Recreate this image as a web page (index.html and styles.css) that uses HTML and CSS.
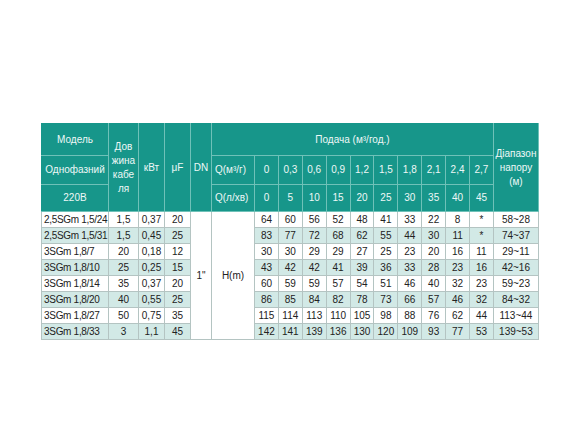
FILE: index.html
```html
<!DOCTYPE html>
<html lang="uk">
<head>
<meta charset="utf-8">
<title>Таблиця</title>
<link rel="stylesheet" href="styles.css">
</head>
<body>
<div class="wrap">
<table class="spec">
  <colgroup>
    <col class="c-model"><col class="c-len"><col class="c-kw"><col class="c-uf"><col class="c-dn"><col class="c-q">
    <col class="c-n"><col class="c-n"><col class="c-n"><col class="c-n"><col class="c-n">
    <col class="c-n"><col class="c-n"><col class="c-n"><col class="c-n"><col class="c-n">
    <col class="c-r">
  </colgroup>
  <thead>
    <tr class="h1">
      <th>Модель</th>
      <th rowspan="3" class="wrapcell">Дов<br>жина<br>кабе<br>ля</th>
      <th rowspan="3">кВт</th>
      <th rowspan="3">μF</th>
      <th rowspan="3">DN</th>
      <th colspan="11">Подача (м³/год.)</th>
      <th rowspan="3" class="wrapcell">Діапазон<br>напору<br>(м)</th>
    </tr>
    <tr class="h2">
      <th>Однофазний</th>
      <th class="ql">Q(м³/г)</th>
      <th>0</th><th>0,3</th><th>0,6</th><th>0,9</th><th>1,2</th><th>1,5</th><th>1,8</th><th>2,1</th><th>2,4</th><th>2,7</th>
    </tr>
    <tr class="h3">
      <th>220В</th>
      <th class="ql">Q(л/хв)</th>
      <th>0</th><th>5</th><th>10</th><th>15</th><th>20</th><th>25</th><th>30</th><th>35</th><th>40</th><th>45</th>
    </tr>
  </thead>
  <tbody>
    <tr>
      <td class="m">2,5SGm 1,5/24</td><td>1,5</td><td>0,37</td><td>20</td>
      <td rowspan="8" class="plain">1"</td><td rowspan="8" class="plain">H(m)</td>
      <td>64</td><td>60</td><td>56</td><td>52</td><td>48</td><td>41</td><td>33</td><td>22</td><td>8</td><td>*</td><td>58~28</td>
    </tr>
    <tr class="alt">
      <td class="m">2,5SGm 1,5/31</td><td>1,5</td><td>0,45</td><td>25</td>
      <td>83</td><td>77</td><td>72</td><td>68</td><td>62</td><td>55</td><td>44</td><td>30</td><td>11</td><td>*</td><td>74~37</td>
    </tr>
    <tr>
      <td class="m">3SGm 1,8/7</td><td>20</td><td>0,18</td><td>12</td>
      <td>30</td><td>30</td><td>29</td><td>29</td><td>27</td><td>25</td><td>23</td><td>20</td><td>16</td><td>11</td><td>29~11</td>
    </tr>
    <tr class="alt">
      <td class="m">3SGm 1,8/10</td><td>25</td><td>0,25</td><td>15</td>
      <td>43</td><td>42</td><td>42</td><td>41</td><td>39</td><td>36</td><td>33</td><td>28</td><td>23</td><td>16</td><td>42~16</td>
    </tr>
    <tr>
      <td class="m">3SGm 1,8/14</td><td>35</td><td>0,37</td><td>20</td>
      <td>60</td><td>59</td><td>59</td><td>57</td><td>54</td><td>51</td><td>46</td><td>40</td><td>32</td><td>23</td><td>59~23</td>
    </tr>
    <tr class="alt">
      <td class="m">3SGm 1,8/20</td><td>40</td><td>0,55</td><td>25</td>
      <td>86</td><td>85</td><td>84</td><td>82</td><td>78</td><td>73</td><td>66</td><td>57</td><td>46</td><td>32</td><td>84~32</td>
    </tr>
    <tr>
      <td class="m">3SGm 1,8/27</td><td>50</td><td>0,75</td><td>35</td>
      <td>115</td><td>114</td><td>113</td><td>110</td><td>105</td><td>98</td><td>88</td><td>76</td><td>62</td><td>44</td><td>113~44</td>
    </tr>
    <tr class="alt">
      <td class="m">3SGm 1,8/33</td><td>3</td><td>1,1</td><td>45</td>
      <td>142</td><td>141</td><td>139</td><td>136</td><td>130</td><td>120</td><td>109</td><td>93</td><td>77</td><td>53</td><td>139~53</td>
    </tr>
  </tbody>
</table>
</div>
</body>
</html>
```

FILE: styles.css
```css
html, body {
  margin: 0;
  padding: 0;
  background: #ffffff;
}
.wrap {
  padding: 123px 0 0 41px;
}
.spec {
  border-collapse: collapse;
  table-layout: fixed;
  width: 497px;
  font-family: "Liberation Sans", Arial, sans-serif;
  font-size: 10px;
  color: #222222;
}
.c-model { width: 67px; }
.c-len { width: 30px; }
.c-kw { width: 26px; }
.c-uf { width: 26px; }
.c-dn { width: 21px; }
.c-q { width: 43px; }
.c-n { width: 23.9px; }
.c-r { width: 45px; }

.spec th {
  background: #17968a;
  color: #eef8f7;
  font-weight: normal;
  font-size: 10px;
  border: 1px solid #6fc1b8;
  padding: 0;
  text-align: center;
  vertical-align: middle;
  line-height: 12px;
}
.spec thead tr:first-child th {
  border-top-color: #17968a;
}
.spec th:first-child { border-left-color: #17968a; }
.spec th.wrapcell { line-height: 14px; }
.spec th.ql { text-align: left; padding-left: 3px; }
.h1 { height: 32px; }
.h2 { height: 29px; }
.h3 { height: 27px; }

.spec td {
  border: 1px solid #b4c4c2;
  padding: 0;
  text-align: center;
  vertical-align: middle;
  height: 15px;
  line-height: 12px;
  background: #ffffff;
  white-space: nowrap;
}
.spec tr.alt td { background: #d2e9e6; }
.spec tr.alt td.plain, .spec td.plain { background: #ffffff; }
.spec td.m {
  text-align: left;
  padding-left: 2px;
  letter-spacing: -0.3px;
  overflow: hidden;
}
```
